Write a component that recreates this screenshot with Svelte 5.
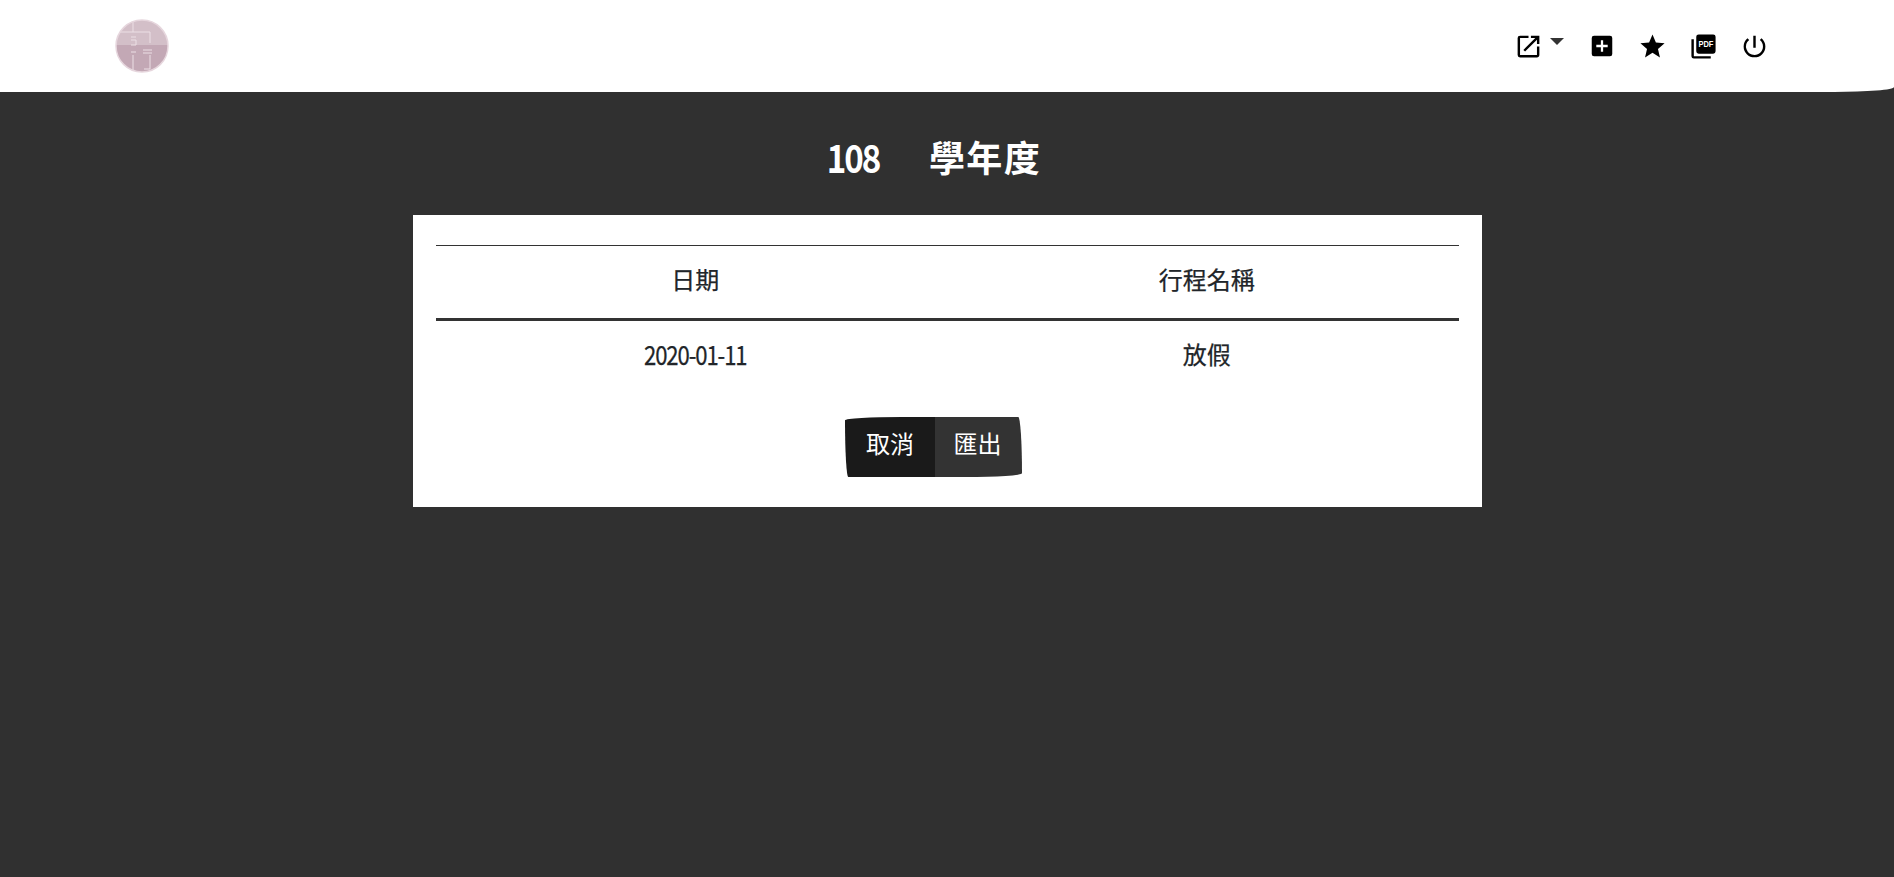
<script>
  const rows = [{ date: '2020-01-11', name: '放假' }];
</script>

<div class="page">
  <header class="nav">
    <div class="logo" aria-label="logo">
      <svg viewBox="0 0 54 54" width="54" height="54">
        <defs><clipPath id="c"><circle cx="27" cy="27" r="26" /></clipPath></defs>
        <g clip-path="url(#c)">
          <rect width="54" height="26" fill="#d3bfc8" />
          <rect y="26" width="54" height="28" fill="#c3a8b5" />
          <g stroke="#ecdfe5" stroke-width="1" fill="none">
            <path d="M18 1V13M3 13H35V24M18 36V52M35 36V50H29" />
            <path d="M16 18H21M16 21H21V26H16M16 33H21M28 31H37M28 34H37" />
          </g>
        </g>
        <circle cx="27" cy="27" r="26" fill="none" stroke="#e6d6dd" stroke-width="1.5" />
      </svg>
    </div>
    <nav class="tools">
      <button class="tool drop" aria-label="open">
        <svg viewBox="0 0 24 24" width="29" height="29"><path d="M19 19H5V5h7V3H5a2 2 0 0 0-2 2v14a2 2 0 0 0 2 2h14c1.100 0 2-.9 2-2v-7h-2v7zM14 3v2h3.590l-9.830 9.830 1.410 1.410L19 6.410V10h2V3h-7z" /></svg>
        <span class="caret"></span>
      </button>
      <button class="tool" aria-label="add">
        <svg viewBox="0 0 24 24" width="24" height="24"><path d="M19 3H5a2 2 0 0 0-2 2v14a2 2 0 0 0 2 2h14a2 2 0 0 0 2-2V5a2 2 0 0 0-2-2zm-2 10h-4v4h-2v-4H7v-2h4V7h2v4h4v2z" transform="translate(12 12) scale(1.14) translate(-12 -12)" /></svg>
      </button>
      <button class="tool" aria-label="favourite">
        <svg viewBox="0 0 24 24" width="29" height="29"><path d="M12 17.270 18.180 21l-1.640-7.030L22 9.240l-7.190-.61L12 2 9.190 8.630 2 9.240l5.460 4.730L5.820 21z" /></svg>
      </button>
      <button class="tool" aria-label="pdf">
        <svg viewBox="0 0 24 24" width="29" height="29"><path d="M20 2H8a2 2 0 0 0-2 2v12a2 2 0 0 0 2 2h12a2 2 0 0 0 2-2V4a2 2 0 0 0-2-2zM4 6H2v14a2 2 0 0 0 2 2h14v-2H4V6z" /><text class="pdf" x="14" y="12.800" text-anchor="middle" textLength="12.400" lengthAdjust="spacingAndGlyphs">PDF</text></svg>
      </button>
      <button class="tool" aria-label="power">
        <svg viewBox="0 0 24 24" width="29" height="29"><path d="M13 3h-2v10h2V3zm4.830 2.170-1.420 1.420A6.920 6.920 0 0 1 19 12c0 3.870-3.130 7-7 7A6.995 6.995 0 0 1 7.580 6.580L6.170 5.170A8.932 8.932 0 0 0 3 12a9 9 0 0 0 18 0c0-2.740-1.230-5.180-3.170-6.830z" /></svg>
      </button>
    </nav>
  </header>

  <main class="main">
    <h1 class="title"><span class="num year">108</span><span>學年度</span></h1>
    <section class="card">
      <table>
        <thead>
          <tr><th>日期</th><th>行程名稱</th></tr>
        </thead>
        <tbody>
          {#each rows as row}
            <tr><td><span class="num">{row.date}</span></td><td>{row.name}</td></tr>
          {/each}
        </tbody>
      </table>
      <div class="actions">
        <button class="btn cancel">取消</button>
        <button class="btn export">匯出</button>
      </div>
    </section>
  </main>
</div>

<style>
  :global(body) {
    margin: 0;
    background: #303030;
    font-family: "Noto Sans CJK TC", "Noto Sans", sans-serif;
  }
  .page {
    min-height: 877px;
    background: #303030;
    overflow: hidden;
  }
  .nav {
    height: 92px;
    box-sizing: border-box;
    background: #fff;
    display: flex;
    align-items: center;
    justify-content: space-between;
    padding: 0 115px;
    border-bottom-right-radius: 60px 5px;
  }
  .logo {
    width: 54px;
    height: 54px;
    display: flex;
  }
  .tools {
    display: flex;
    align-items: center;
    margin-right: -1px;
  }
  .tool {
    width: 51px;
    height: 40px;
    border: 0;
    padding: 0;
    background: none;
    display: flex;
    align-items: center;
    justify-content: center;
  }
  .tool.drop {
    width: 62px;
    justify-content: flex-start;
  }
  .caret {
    width: 0;
    height: 0;
    border-left: 7px solid transparent;
    border-right: 7px solid transparent;
    border-top: 7px solid #333;
    margin-left: 7px;
    margin-top: -10px;
  }
  .pdf {
    font-family: "Liberation Sans", sans-serif;
    font-weight: 700;
    font-size: 8px;
    fill: #fff;
  }
  .main {
    display: flex;
    flex-direction: column;
    align-items: center;
  }
  .title {
    margin: 41px 0 0;
    padding-right: 26px;
    height: 46px;
    line-height: 46px;
    font-size: 36px;
    font-weight: 700;
    color: #fff;
    display: flex;
    gap: 50px;
    letter-spacing: 1.4px;
  }
  .num {
    display: inline-block;
    transform: scaleX(0.85);
    letter-spacing: -1.300px;
    font-size: 26px;
  }
  .year {
    font-size: 39px;
    letter-spacing: -2.300px;
    margin: 0 -5px;
  }
  .card {
    width: 1069px;
    margin-top: 36px;
    margin-left: 1px;
    background: #fff;
    box-sizing: border-box;
    padding: 30px 23px 30px;
    display: flex;
    flex-direction: column;
    align-items: center;
  }
  table {
    width: 100%;
    border-collapse: separate;
    border-spacing: 0;
    table-layout: fixed;
    color: #212529;
    font-size: 24px;
  }
  th {
    font-weight: 400;
    height: 76px;
    padding: 0 0 8px 7px;
    box-sizing: border-box;
    border-top: 1px solid #333;
    border-bottom: 3px solid #333;
    text-align: center;
    -webkit-text-stroke: 0.25px #212529;
  }
  td {
    height: 76px;
    box-sizing: border-box;
    padding: 0 0 12px 7px;
    text-align: center;
    -webkit-text-stroke: 0.25px #212529;
  }
  .actions {
    display: flex;
    margin-top: 20px;
    margin-right: 28px;
  }
  .btn {
    height: 60px;
    border: 0;
    color: #fff;
    font: 400 24px "Noto Sans CJK TC", sans-serif;
    padding: 0 0 9px;
  }
  .cancel {
    width: 90px;
    background: #1a1a1a;
    border-top-left-radius: 255px 15px;
    border-bottom-left-radius: 15px 255px;
  }
  .export {
    width: 87px;
    padding-right: 2px;
    background: #333;
    border-top-right-radius: 15px 225px;
    border-bottom-right-radius: 225px 15px;
  }
</style>
